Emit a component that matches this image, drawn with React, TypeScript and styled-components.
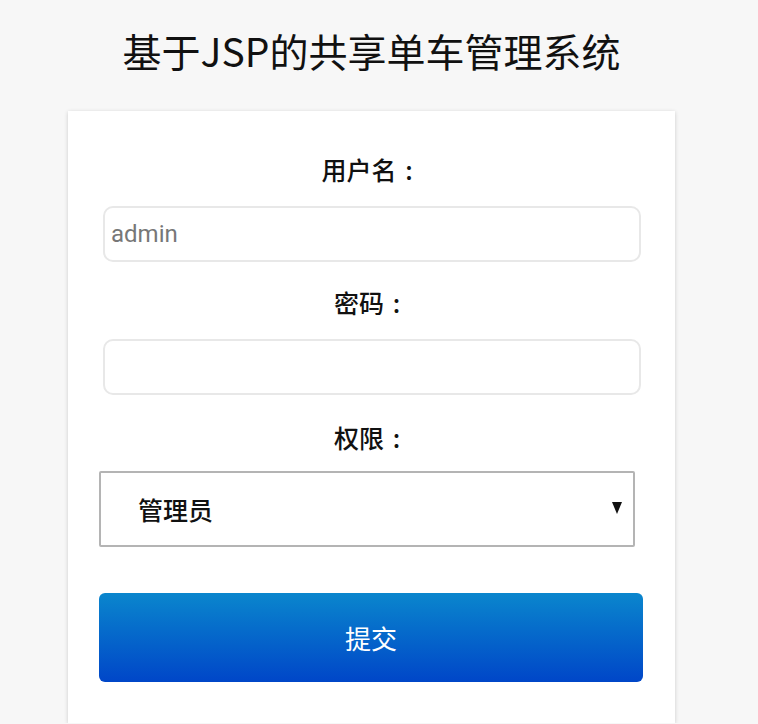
import styled, { createGlobalStyle } from "styled-components";

const GlobalStyle = createGlobalStyle`
    body {
        margin: 0;
        background: #f7f7f7;
        font-family: "Noto Sans CJK SC", "Noto Sans", sans-serif;
        color: #111;
    }
`;

const Page = styled.div`
    width: 743px;
    padding-top: 26px;
    display: flex;
    flex-direction: column;
    align-items: center;
`;
const Title = styled.h1`
    margin: 0 0 37px;
    font-size: 39px;
    line-height: 48px;
    font-weight: 400;
    color: #111;
`;
const Card = styled.form`
    width: 607px;
    box-sizing: border-box;
    background: #fff;
    box-shadow: 0 1px 4px rgba(0, 0, 0, 0.18);
    padding: 42px 0 41px;
    display: flex;
    flex-direction: column;
`;
const Label = styled.label<{ $gap: number }>`
    margin-top: ${(p) => p.$gap}px;
    font-size: 25px;
    line-height: 32px;
    font-weight: 500;
    text-align: center;
    color: #111;
`;
const Colon = styled.span`
    display: inline-block;
    width: 1em;
    text-align: center;
`;
const TextInput = styled.input`
    margin: 21px 34px 0 35px;
    height: 56px;
    box-sizing: border-box;
    border: 2px solid #e8e8e8;
    border-radius: 10px;
    padding: 0 6px;
    font-family: Roboto, "Liberation Sans", sans-serif;
    font-size: 24px;
    color: #777;
    outline: none;
`;
const SelectWrap = styled.div`
    position: relative;
    margin: 18px 0 0 31px;
    width: 536px;
`;
const Select = styled.select`
    appearance: none;
    width: 100%;
    height: 76px;
    box-sizing: border-box;
    border: 2px solid #b4b4b4;
    border-radius: 2px;
    background: #fff;
    padding: 0 0 0 37px;
    font-family: "Noto Sans CJK SC", sans-serif;
    font-size: 25px;
    font-weight: 500;
    color: #111;
    outline: none;
`;
const Arrow = styled.svg`
    position: absolute;
    right: 13px;
    top: 31px;
    pointer-events: none;
`;
const Submit = styled.button`
    margin: 46px 0 0 31px;
    width: 544px;
    height: 89px;
    border: 0;
    border-radius: 6px;
    background: linear-gradient(to bottom, #0a86cd, #0046c8);
    color: #fff;
    font-family: "Noto Sans CJK SC", sans-serif;
    font-size: 26px;
    cursor: pointer;
`;

export default function App() {
    return <>
        <GlobalStyle />
        <Page>
            <Title>基于JSP的共享单车管理系统</Title>
            <Card onSubmit={(e) => e.preventDefault()}>
                <Label $gap={0}>用户名<Colon>:</Colon></Label>
                <TextInput type="text" defaultValue="admin" />
                <Label $gap={24}>密码<Colon>:</Colon></Label>
                <TextInput type="password" />
                <Label $gap={26}>权限<Colon>:</Colon></Label>
                <SelectWrap>
                    <Select defaultValue="admin">
                        <option value="admin">管理员</option>
                        <option value="user">用户</option>
                    </Select>
                    <Arrow width="10" height="12" viewBox="0 0 10 12">
                        <path d="M0 0 L10 0 L5 12 Z" fill="#111" />
                    </Arrow>
                </SelectWrap>
                <Submit type="submit">提交</Submit>
            </Card>
        </Page>
    </>
}
